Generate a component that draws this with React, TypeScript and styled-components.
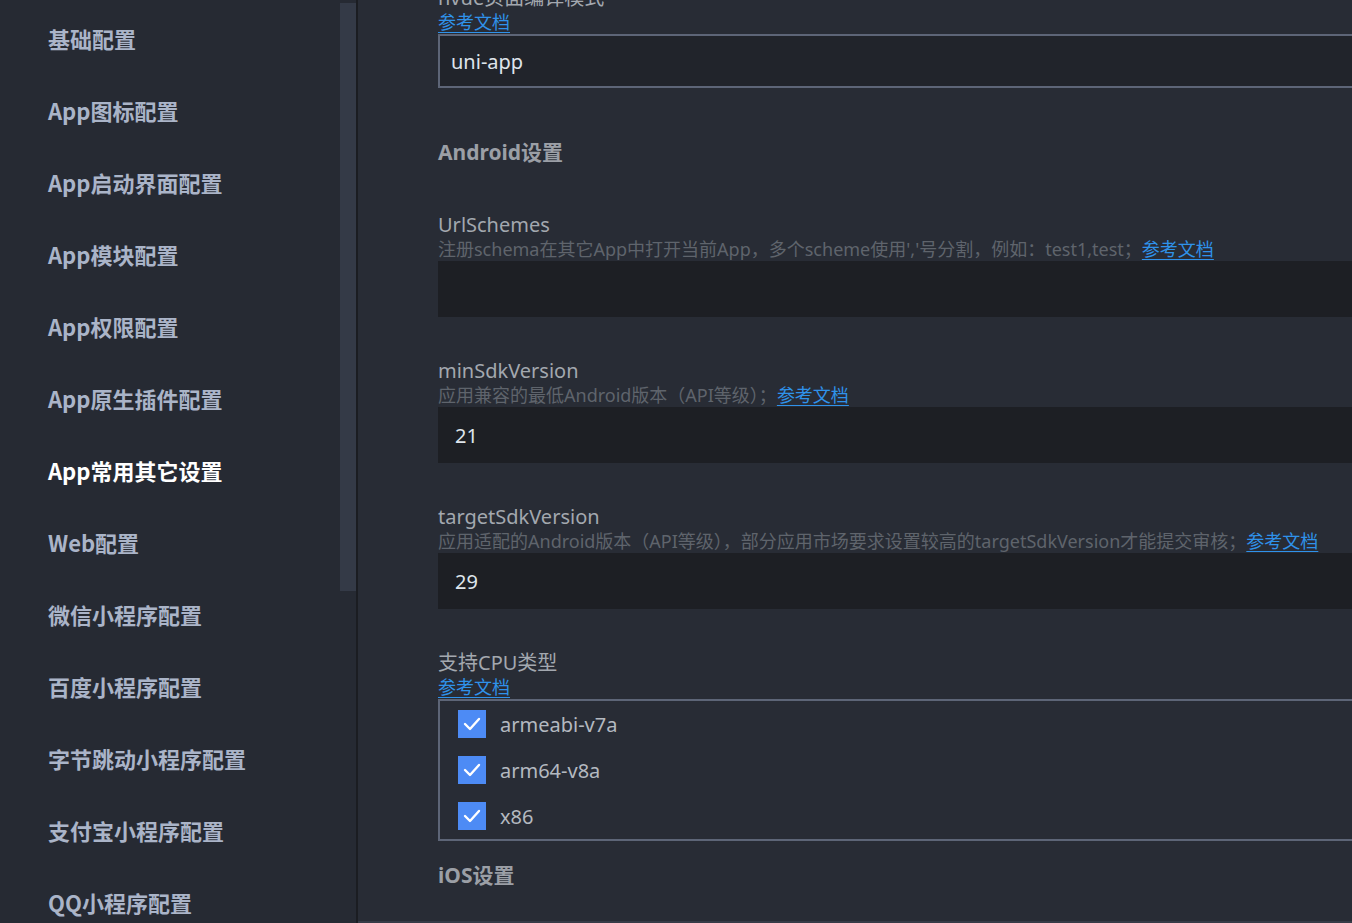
import React from "react";
import styled, { createGlobalStyle } from "styled-components";

const GlobalStyle = createGlobalStyle`
  html, body {
    margin: 0;
    padding: 0;
    background: #282c35;
    overflow: hidden;
  }
  body {
    font-family: "Noto Sans", "Noto Sans CJK SC", sans-serif;
  }
`;

const Page = styled.div`
  display: flex;
  width: 1352px;
  height: 923px;
  overflow: hidden;
`;

const Sidebar = styled.aside`
  display: flex;
  width: 356px;
  flex: none;
  background: #262a33;
  border-right: 2px solid #1b1d22;
`;

const NavList = styled.ul`
  flex: 1;
  list-style: none;
  margin: 0;
  padding: 2px 0 0;
`;

const NavItem = styled.li<{ $active?: boolean }>`
  height: 72px;
  display: flex;
  align-items: center;
  padding-left: 48px;
  font-family: "Noto Sans CJK SC", sans-serif;
  font-size: 22px;
  font-weight: 700;
  color: ${(p) => (p.$active ? "#ffffff" : "#aab4c8")};
  white-space: nowrap;
`;

const ScrollTrack = styled.div`
  width: 16px;
  flex: none;
  padding-top: 3px;
`;

const ScrollThumb = styled.div`
  height: 588px;
  background: #343a47;
`;

const Main = styled.main`
  flex: 1;
  display: flex;
  flex-direction: column;
  min-width: 0;
`;

const Scroller = styled.div`
  flex: 1;
  overflow: hidden;
  padding-left: 80px;
`;

const Inner = styled.div`
  margin-top: -15px;
`;

const Field = styled.div<{ $gap?: number }>`
  margin-top: ${(p) => p.$gap ?? 41}px;
`;

const Label = styled.div`
  font-size: 20px;
  line-height: 25px;
  color: #a3a8af;
  white-space: nowrap;
`;

const Desc = styled.div`
  font-size: 18px;
  line-height: 24px;
  color: #5f646c;
  white-space: nowrap;
`;

const Link = styled.a`
  font-size: 18px;
  line-height: 24px;
  color: #2f92ea;
  text-decoration: underline;
  text-underline-offset: 3px;
  cursor: pointer;
`;

const LinkLine = styled.div`
  line-height: 24px;
  height: 24px;
`;

const Input = styled.div<{ $bordered?: boolean }>`
  height: ${(p) => (p.$bordered ? 54 : 56)}px;
  box-sizing: border-box;
  display: flex;
  align-items: center;
  padding-left: ${(p) => (p.$bordered ? 11 : 17)}px;
  font-size: 20px;
  color: #dfe5ec;
  background: ${(p) => (p.$bordered ? "#21242b" : "#1d1f24")};
  border: ${(p) => (p.$bordered ? "2px solid #5d6577" : "none")};
  border-right: none;
`;

/* margins collapse with the next Field's margin-top */
const SectionTitle = styled.h2<{ $top: number; $bottom?: number }>`
  margin: ${(p) => p.$top}px 0 ${(p) => p.$bottom ?? 0}px;
  font-size: 21px;
  line-height: 30px;
  font-weight: 700;
  color: #9b9fa6;
`;

const CheckGroup = styled.div`
  border: 2px solid #5d6577;
  border-right: none;
`;

const CheckRow = styled.label`
  height: 46px;
  display: flex;
  align-items: center;
  gap: 14px;
  padding-left: 18px;
  font-size: 20px;
  color: #b4b9c0;
`;

const CheckBox = styled.span`
  width: 28px;
  height: 28px;
  background: #4d8bf5;
  display: flex;
  align-items: center;
  justify-content: center;
`;

const BottomBar = styled.div`
  height: 2px;
  background: #363b47;
`;

const nav = [
  "基础配置",
  "App图标配置",
  "App启动界面配置",
  "App模块配置",
  "App权限配置",
  "App原生插件配置",
  "App常用其它设置",
  "Web配置",
  "微信小程序配置",
  "百度小程序配置",
  "字节跳动小程序配置",
  "支付宝小程序配置",
  "QQ小程序配置",
];

const Check = () => (
  <CheckBox>
    <svg width="18" height="14" viewBox="0 0 18 14">
      <polyline
        points="2,7 7,12 16,2"
        fill="none"
        stroke="#ffffff"
        strokeWidth="2.4"
        strokeLinecap="round"
        strokeLinejoin="round"
      />
    </svg>
  </CheckBox>
);

export default function App() {
  return (
    <>
      <GlobalStyle />
      <Page>
        <Sidebar>
          <NavList>
            {nav.map((n) => (
              <NavItem key={n} $active={n === "App常用其它设置"}>
                {n}
              </NavItem>
            ))}
          </NavList>
          <ScrollTrack>
            <ScrollThumb />
          </ScrollTrack>
        </Sidebar>
        <Main>
          <Scroller>
            <Inner>
              <Field $gap={0}>
                <Label>nvue页面编译模式</Label>
                <LinkLine>
                  <Link>参考文档</Link>
                </LinkLine>
                <Input $bordered>uni-app</Input>
              </Field>

              <SectionTitle $top={49} $bottom={45}>
                Android设置
              </SectionTitle>

              <Field>
                <Label>UrlSchemes</Label>
                <Desc>
                  注册schema在其它App中打开当前App，多个scheme使用','号分割，例如：test1,test；
                  <Link>参考文档</Link>
                </Desc>
                <Input />
              </Field>

              <Field>
                <Label>minSdkVersion</Label>
                <Desc>
                  应用兼容的最低Android版本（API等级）；<Link>参考文档</Link>
                </Desc>
                <Input>21</Input>
              </Field>

              <Field>
                <Label>targetSdkVersion</Label>
                <Desc>
                  应用适配的Android版本（API等级），部分应用市场要求设置较高的targetSdkVersion才能提交审核；
                  <Link>参考文档</Link>
                </Desc>
                <Input>29</Input>
              </Field>

              <Field>
                <Label>支持CPU类型</Label>
                <LinkLine>
                  <Link>参考文档</Link>
                </LinkLine>
                <CheckGroup>
                  {["armeabi-v7a", "arm64-v8a", "x86"].map((c) => (
                    <CheckRow key={c}>
                      <Check />
                      {c}
                    </CheckRow>
                  ))}
                </CheckGroup>
              </Field>

              <SectionTitle $top={19}>iOS设置</SectionTitle>
            </Inner>
          </Scroller>
          <BottomBar />
        </Main>
      </Page>
    </>
  );
}
